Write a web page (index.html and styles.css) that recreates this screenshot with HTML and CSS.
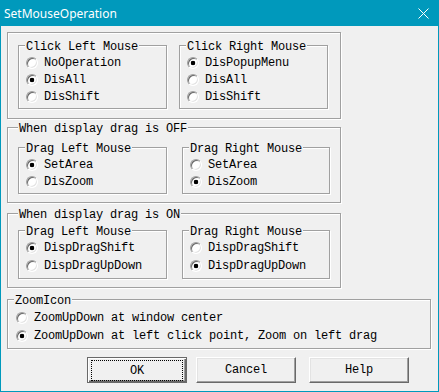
FILE: index.html
```html
<!DOCTYPE html>
<html lang="en">
<head>
    <meta charset="UTF-8">
    <meta name="viewport" content="width=device-width, initial-scale=1.0">
    <title>SetMouseOperation</title>
    <link rel="stylesheet" href="styles.css">
</head>
<body>
    <div class="window">
        <!-- Barra de titulo -->
        <div class="titlebar">
            <span class="title">SetMouseOperation</span>
            <svg class="close" width="11" height="11" viewBox="0 0 11 11">
                <path d="M0.5 0.5 L10.5 10.5 M10.5 0.5 L0.5 10.5" stroke="#fff" stroke-width="1" fill="none"/>
            </svg>
        </div>

        <div class="content">
            <!-- Click -->
            <fieldset class="group g-click">
                <div class="row">
                    <fieldset class="box">
                        <legend>Click Left Mouse</legend>
                        <label class="opt"><input type="radio" name="cl"><span>NoOperation</span></label>
                        <label class="opt"><input type="radio" name="cl" checked><span>DisAll</span></label>
                        <label class="opt"><input type="radio" name="cl"><span>DisShift</span></label>
                    </fieldset>
                    <fieldset class="box">
                        <legend>Click Right Mouse</legend>
                        <label class="opt"><input type="radio" name="cr" checked><span>DisPopupMenu</span></label>
                        <label class="opt"><input type="radio" name="cr"><span>DisAll</span></label>
                        <label class="opt"><input type="radio" name="cr"><span>DisShift</span></label>
                    </fieldset>
                </div>
            </fieldset>

            <!-- Drag OFF -->
            <fieldset class="group g-off">
                <legend>When display drag is OFF</legend>
                <div class="row">
                    <fieldset class="box">
                        <legend>Drag Left Mouse</legend>
                        <label class="opt"><input type="radio" name="dl" checked><span>SetArea</span></label>
                        <label class="opt"><input type="radio" name="dl"><span>DisZoom</span></label>
                    </fieldset>
                    <fieldset class="box narrow">
                        <legend>Drag Right Mouse</legend>
                        <label class="opt"><input type="radio" name="dr"><span>SetArea</span></label>
                        <label class="opt"><input type="radio" name="dr" checked><span>DisZoom</span></label>
                    </fieldset>
                </div>
            </fieldset>

            <!-- Drag ON -->
            <fieldset class="group g-on">
                <legend>When display drag is ON</legend>
                <div class="row">
                    <fieldset class="box tall">
                        <legend>Drag Left Mouse</legend>
                        <label class="opt"><input type="radio" name="ol" checked><span>DispDragShift</span></label>
                        <label class="opt"><input type="radio" name="ol"><span>DispDragUpDown</span></label>
                    </fieldset>
                    <fieldset class="box narrow tall">
                        <legend>Drag Right Mouse</legend>
                        <label class="opt"><input type="radio" name="or"><span>DispDragShift</span></label>
                        <label class="opt"><input type="radio" name="or" checked><span>DispDragUpDown</span></label>
                    </fieldset>
                </div>
            </fieldset>

            <!-- ZoomIcon -->
            <fieldset class="group g-zoom">
                <legend>ZoomIcon</legend>
                <label class="opt"><input type="radio" name="zi"><span>ZoomUpDown at window center</span></label>
                <label class="opt"><input type="radio" name="zi" checked><span>ZoomUpDown at left click point, Zoom on left drag</span></label>
            </fieldset>

            <div class="buttons">
                <button class="btn default"><span class="focus">OK</span></button>
                <button class="btn cancel">Cancel</button>
                <button class="btn help">Help</button>
            </div>
        </div>
    </div>
</body>
</html>
```

FILE: styles.css
```css
/* Dialogo estilo Windows */
* {
    box-sizing: border-box;
}

body {
    margin: 0;
    background: #f0f0f0;
    font-family: "Liberation Mono", "Courier New", monospace;
    font-size: 12px;
    letter-spacing: -0.2px;
    color: #000;
}

.window {
    width: 439px;
    height: 392px;
    border: 1px solid #0099bc;
    background: #f0f0f0;
}

.titlebar {
    height: 25px;
    background: #0099bc;
    color: #fff;
    display: flex;
    align-items: center;
    justify-content: space-between;
    padding: 0 9px 0 3px;
    font-family: "Noto Sans", sans-serif;
    font-size: 12px;
    letter-spacing: 0;
}

.close {
    display: block;
}

.content {
    padding: 6px 0 0 6px;
}

/* Caixas de grupo (etched) */
fieldset {
    margin: 0;
    padding: 0 6px;
    min-width: 0;
    border: 1px solid #a0a0a0;
    box-shadow: inset 1px 1px 0 #fff, 1px 1px 0 #fff;
}

legend {
    padding: 3px 1px 0;
    line-height: 12px;
    background: #f0f0f0;
}

.row {
    display: flex;
}

.group {
    width: 334px;
}

.g-click {
    padding: 5px 12px 9px 10px;
}

.g-click .row {
    gap: 12px;
}

.g-off {
    margin-top: 1px;
    padding: 5px 10px 8px 10px;
}

.g-on {
    margin-top: 3px;
    padding: 2px 10px 8px 10px;
}

.g-off .row,
.g-on .row {
    gap: 15px;
}

.box {
    width: 149px;
    padding: 1px 6px 3px;
}

.box.narrow {
    width: 148px;
}

.g-zoom {
    width: 424px;
    margin-top: 4px;
    padding: 2px 6px 3px;
}

/* Opcoes */
.opt {
    display: flex;
    align-items: center;
    gap: 6px;
    height: 17px;
    white-space: nowrap;
}

.tall .opt,
.g-zoom .opt {
    height: 18px;
}

.g-zoom .opt {
    padding-left: 1px;
}

.opt input {
    appearance: none;
    -webkit-appearance: none;
    width: 12px;
    height: 12px;
    margin: 0 0 0 1px;
    border: 1px solid;
    border-color: #a0a0a0 #fff #fff #a0a0a0;
    border-radius: 50%;
    background: #fff;
    box-shadow: inset 1px 1px 0 #696969, inset -1px -1px 0 #e3e3e3;
    flex: none;
}

.opt input:checked {
    background: radial-gradient(circle, #000 0 2px, #fff 2.6px);
}

/* Botoes */
.buttons {
    display: flex;
    margin-top: 8px;
    padding-left: 80px;
}

.btn {
    width: 100px;
    height: 26px;
    margin: 0;
    padding: 0;
    font-family: inherit;
    font-size: 12px;
    letter-spacing: -0.2px;
    color: #000;
    background: #f0f0f0;
    border: 1px solid;
    border-color: #fff #696969 #696969 #fff;
    box-shadow: inset -1px -1px 0 #a0a0a0, inset 1px 1px 0 #e3e3e3;
}

.btn.default {
    border-color: #696969;
    box-shadow: inset 1px 1px 0 #fff, inset -1px -1px 0 #696969, inset -2px -2px 0 #a0a0a0;
    padding: 2px 2px 1px 3px;
    display: flex;
}

.focus {
    flex: 1;
    display: flex;
    align-items: center;
    justify-content: center;
    border: 1px dotted #000;
    margin: 0 1px 0 0;
}

.btn.cancel {
    margin-left: 9px;
}

.btn.help {
    margin-left: 13px;
}
```
